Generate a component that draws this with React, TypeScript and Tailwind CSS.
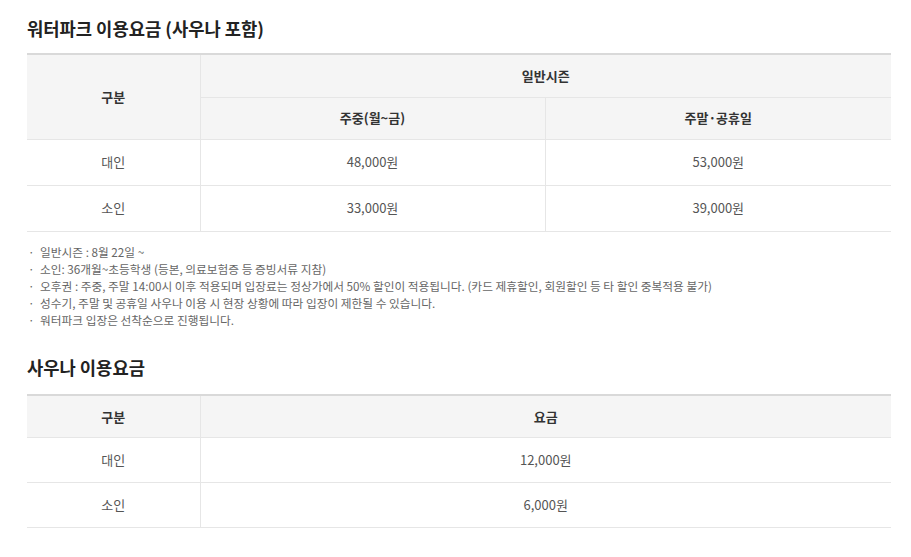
const font = { fontFamily: '"Noto Sans CJK KR", "Noto Sans", sans-serif' };

const notes = [
  "일반시즌 : 8월 22일 ~",
  "소인: 36개월~초등학생 (등본, 의료보험증 등 증빙서류 지참)",
  "오후권 : 주중, 주말 14:00시 이후 적용되며 입장료는 정상가에서 50% 할인이 적용됩니다. (카드 제휴할인, 회원할인 등 타 할인 중복적용 불가)",
  "성수기, 주말 및 공휴일 사우나 이용 시 현장 상황에 따라 입장이 제한될 수 있습니다.",
  "워터파크 입장은 선착순으로 진행됩니다.",
];

const th = "bg-[#f5f5f5] border-b border-[#e6e6e6] text-[13px] font-bold text-[#333] text-center";
const td = "border-b border-[#e6e6e6] text-[13px] text-[#555] text-center";

export default function App() {
  return (
    <div className="w-[911px] min-h-[557px] bg-white px-[27px] pt-[16px]" style={font}>
      <h2 className="text-[17.7px] leading-[24px] font-bold text-[#222] mb-[13px]">워터파크 이용요금 (사우나 포함)</h2>
      <table className="w-[864px] table-fixed border-collapse border-t-2 border-t-[#d9d9d9]">
        <colgroup>
          <col className="w-[173px]" />
          <col className="w-[345px]" />
          <col />
        </colgroup>
        <thead>
          <tr className="h-[43px]">
            <th rowSpan={2} className={th}>구분</th>
            <th colSpan={2} className={`${th} border-l`}>일반시즌</th>
          </tr>
          <tr className="h-[42px]">
            <th className={`${th} border-l`}>주중(월~금)</th>
            <th className={`${th} border-l`}>주말·공휴일</th>
          </tr>
        </thead>
        <tbody>
          <tr className="h-[46px]">
            <td className={td}>대인</td>
            <td className={`${td} border-l`}>48,000원</td>
            <td className={`${td} border-l`}>53,000원</td>
          </tr>
          <tr className="h-[46px]">
            <td className={td}>소인</td>
            <td className={`${td} border-l`}>33,000원</td>
            <td className={`${td} border-l`}>39,000원</td>
          </tr>
        </tbody>
      </table>

      <ul className="mt-[11px] text-[11.7px] leading-[17px] text-[#666]">
        {notes.map((n) => (
          <li key={n} className="flex">
            <span className="w-[13px] pl-[1px]">·</span>
            <span>{n}</span>
          </li>
        ))}
      </ul>

      <h2 className="mt-[27px] text-[17.7px] leading-[24px] font-bold text-[#222] mb-[15px]">사우나 이용요금</h2>
      <table className="w-[864px] table-fixed border-collapse border-t-2 border-t-[#d9d9d9]">
        <colgroup>
          <col className="w-[173px]" />
          <col />
        </colgroup>
        <thead>
          <tr className="h-[43px]">
            <th className={th}>구분</th>
            <th className={`${th} border-l`}>요금</th>
          </tr>
        </thead>
        <tbody>
          <tr className="h-[45px]">
            <td className={td}>대인</td>
            <td className={`${td} border-l`}>12,000원</td>
          </tr>
          <tr className="h-[45px]">
            <td className={td}>소인</td>
            <td className={`${td} border-l`}>6,000원</td>
          </tr>
        </tbody>
      </table>
    </div>
  );
}
